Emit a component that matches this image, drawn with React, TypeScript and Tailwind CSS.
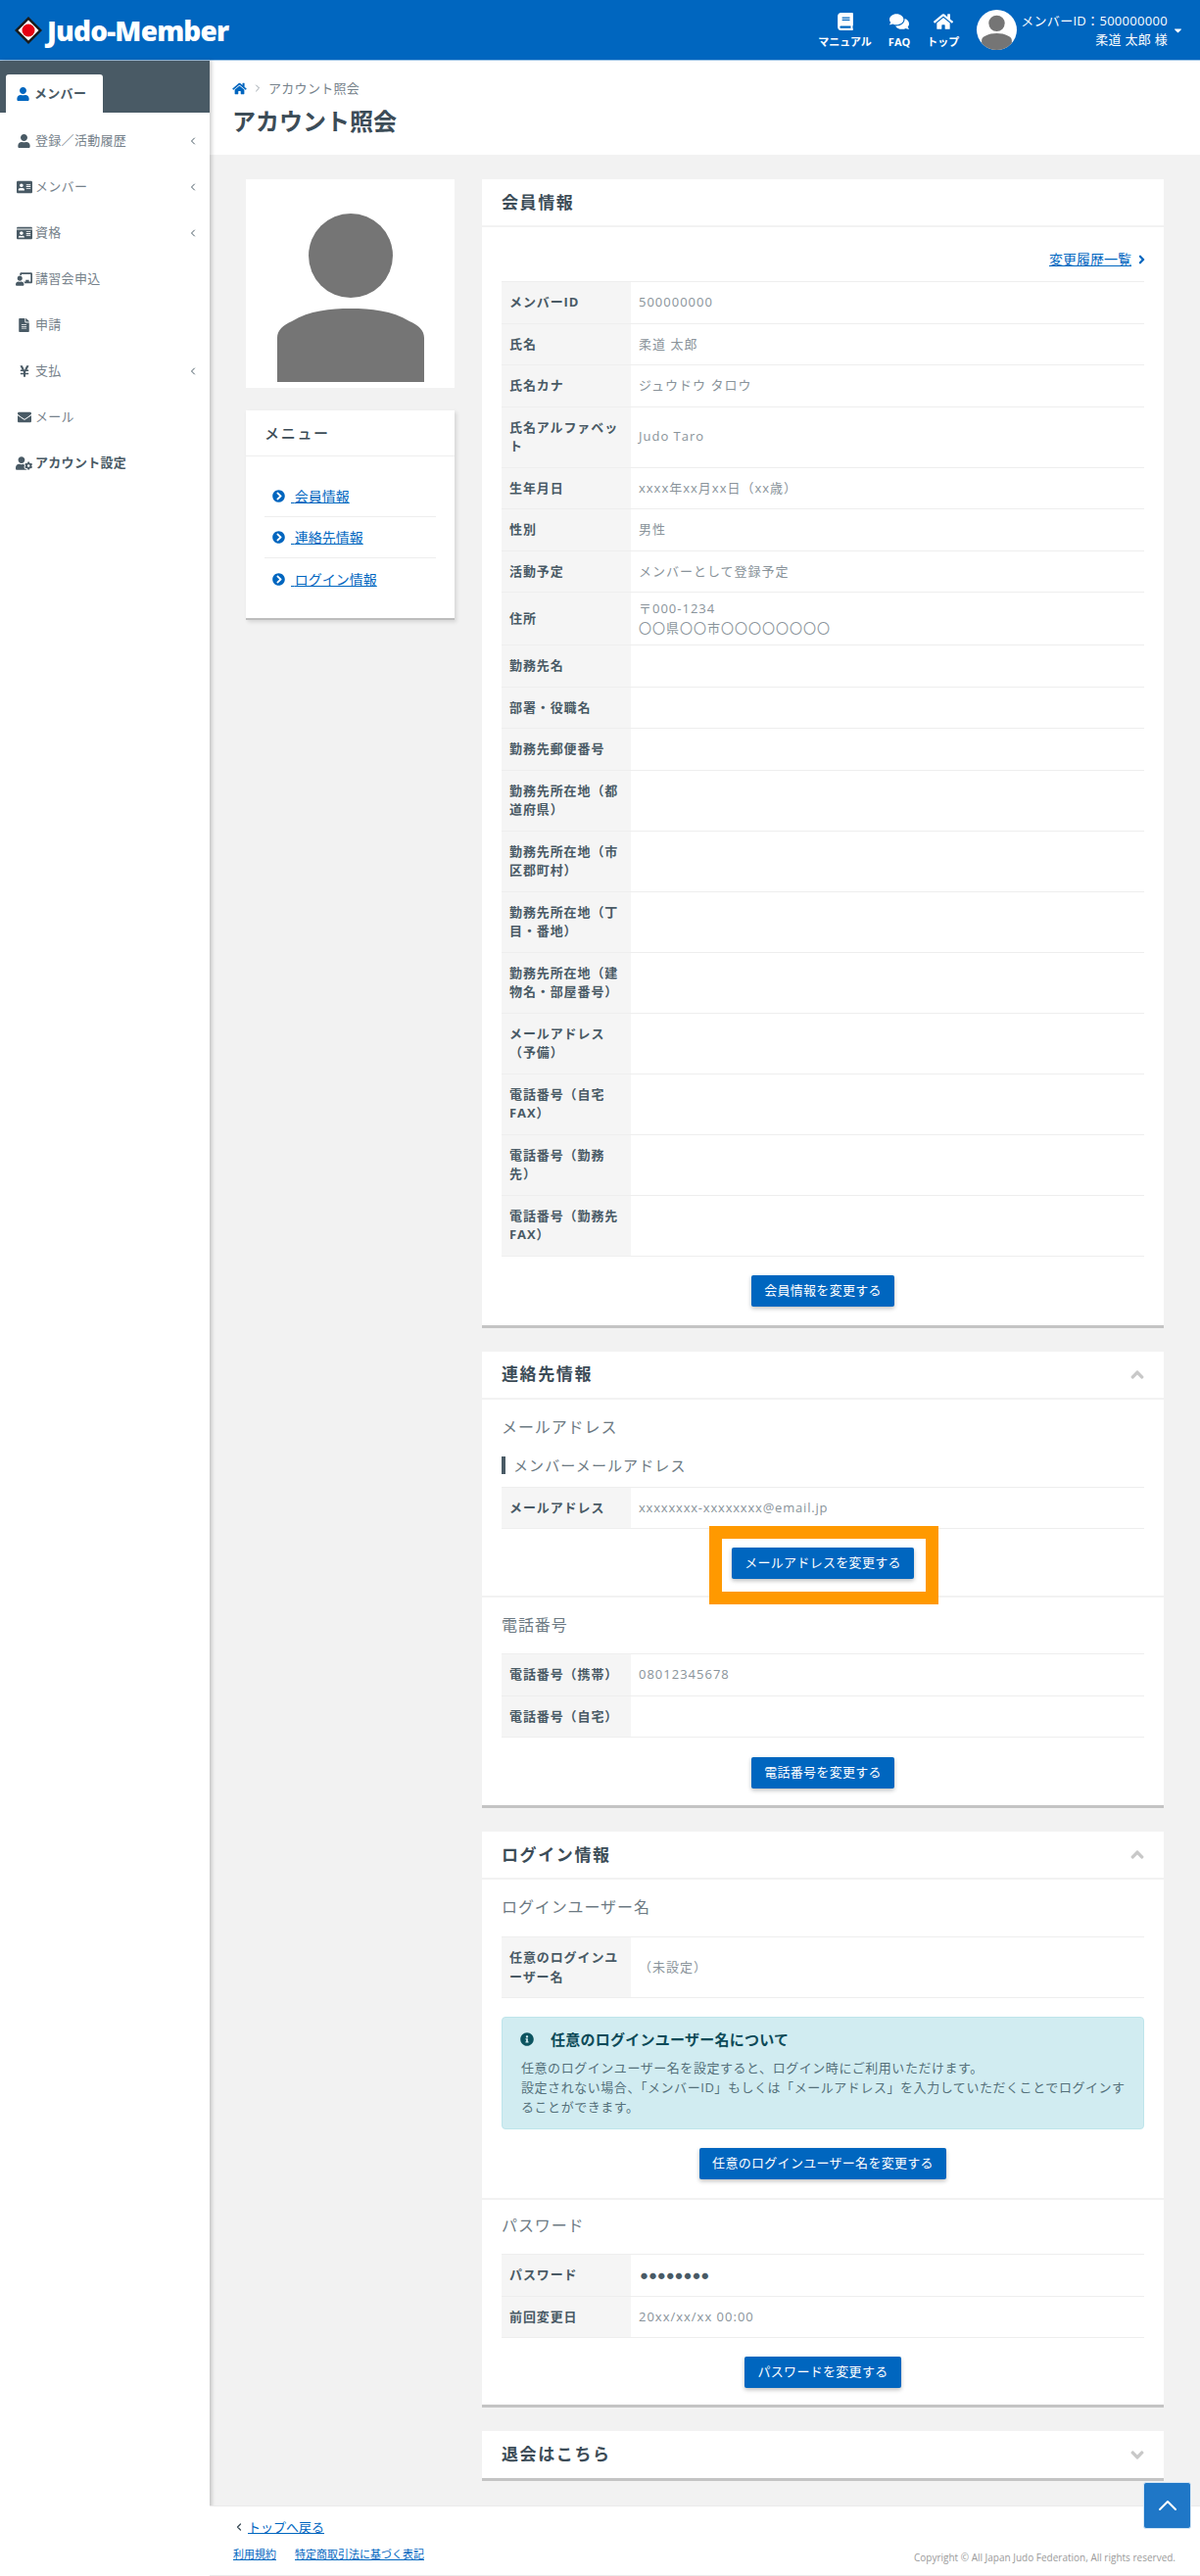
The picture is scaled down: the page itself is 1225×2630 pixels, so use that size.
import type { ReactNode } from "react";
import { ChevronLeft, ChevronRight, ChevronUp } from "lucide-react";
import {
  FaAddressCard,
  FaAngleDown,
  FaAngleRight,
  FaAngleUp,
  FaBook,
  FaCaretDown,
  FaChalkboardTeacher,
  FaChevronCircleRight,
  FaComments,
  FaEnvelope,
  FaFileAlt,
  FaHome,
  FaIdCard,
  FaInfoCircle,
  FaUser,
  FaUserCog,
  FaYenSign,
} from "react-icons/fa";

const navItems = [
  { label: "登録／活動履歴", icon: <FaUser className="w-[13px] h-[14px]" />, arrow: true },
  { label: "メンバー", icon: <FaAddressCard className="w-4 h-4" />, arrow: true },
  { label: "資格", icon: <FaIdCard className="w-4 h-4" />, arrow: true },
  { label: "講習会申込", icon: <FaChalkboardTeacher className="w-[17px] h-[14px]" /> },
  { label: "申請", icon: <FaFileAlt className="w-[11px] h-[14px]" /> },
  { label: "支払", icon: <FaYenSign className="w-[10px] h-[14px]" />, arrow: true },
  { label: "メール", icon: <FaEnvelope className="w-[14px] h-[14px]" /> },
];

const memberRows: [string, ReactNode][] = [
  ["メンバーID", "500000000"],
  ["氏名", "柔道 太郎"],
  ["氏名カナ", "ジュウドウ タロウ"],
  ["氏名アルファベット", "Judo Taro"],
  ["生年月日", "xxxx年xx月xx日（xx歳）"],
  ["性別", "男性"],
  ["活動予定", "メンバーとして登録予定"],
  [
    "住所",
    <>
      〒000-1234
      <br />
      〇〇県〇〇市〇〇〇〇〇〇〇〇
    </>,
  ],
  ["勤務先名", ""],
  ["部署・役職名", ""],
  ["勤務先郵便番号", ""],
  ["勤務先所在地（都道府県）", ""],
  ["勤務先所在地（市区郡町村）", ""],
  ["勤務先所在地（丁目・番地）", ""],
  ["勤務先所在地（建物名・部屋番号）", ""],
  ["メールアドレス（予備）", ""],
  ["電話番号（自宅FAX）", ""],
  ["電話番号（勤務先）", ""],
  ["電話番号（勤務先FAX）", ""],
];

function Logo() {
  return (
    <svg viewBox="0 0 28 28" className="w-[28px] h-[28px] shrink-0">
      <path d="M14 0 L28 14 L14 28 L0 14 Z" fill="#1a1a1a" />
      <path d="M14 3.5 L24.5 14 L14 24.5 L3.5 14 Z" fill="#fff" />
      <circle cx="14" cy="14" r="6.5" fill="#e60012" />
    </svg>
  );
}

function Avatar() {
  return (
    <svg viewBox="0 0 40 40" className="w-[41px] h-[41px] rounded-full bg-white">
      <circle cx="20" cy="13.5" r="8" fill="#757575" />
      <path d="M5 40 V30.5 C5 28 6.5 27 8.5 26 C12 24.2 16 23.5 20 23.5 C24 23.5 28 24.2 31.5 26 C33.5 27 35 28 35 30.5 V40 Z" fill="#757575" />
    </svg>
  );
}

function HeaderLink({ icon, label }: { icon: ReactNode; label: string }) {
  return (
    <a href="#" className="flex flex-col items-center text-white">
      <span className="h-[20px] flex items-center justify-center">{icon}</span>
      <span className="mt-[4px] text-[11px] leading-[14px] font-bold tracking-normal">{label}</span>
    </a>
  );
}

// Header Component
function Header() {
  return (
    <header className="h-[62px] bg-[#0066bf] border-b border-[#9cc3e6] flex items-center justify-between pl-[15px] pr-[18px] text-white">
      <div className="flex items-center gap-[5px]">
        <Logo />
        <span className="text-[28px] leading-none font-extrabold tracking-[-0.8px] font-['Open_Sans',sans-serif]">Judo-Member</span>
      </div>
      <div className="flex items-center">
        <nav className="flex items-start gap-[17px] pt-[1px]">
          <HeaderLink icon={<FaBook className="w-[16px] h-[18px]" />} label="マニュアル" />
          <HeaderLink icon={<FaComments className="w-[20px] h-[18px]" />} label="FAQ" />
          <HeaderLink icon={<FaHome className="w-[20px] h-[18px]" />} label="トップ" />
        </nav>
        <div className="ml-[18px]">
          <Avatar />
        </div>
        <div className="ml-[4px] text-right text-[13px] leading-[19px] tracking-[0.3px]">
          <div>メンバーID：500000000</div>
          <div>柔道 太郎 様</div>
        </div>
        <FaCaretDown className="ml-[6px] w-[9px] h-[12px]" />
      </div>
    </header>
  );
}

// Sidebar
function Sidebar() {
  return (
    <aside className="w-[214px] shrink-0 bg-white shadow-[2px_0_4px_rgba(0,0,0,0.2)] relative">
      <div className="h-[53px] bg-[#495a65] flex items-end pl-[6px]">
        <div className="w-[99px] h-[39px] bg-white rounded-t-[3px] flex items-center gap-[5px] pl-[11px] text-[13px] font-bold text-[#495a65] tracking-[0.3px]">
          <FaUser className="w-[13px] h-[14px] text-[#0066bf]" />
          メンバー
        </div>
      </div>
      <ul className="pt-[5px]">
        {navItems.map((item) => (
          <li key={item.label} className="h-[47px] flex items-center pl-[16px] pr-[11px] text-[13px] text-[#76828b] tracking-[0.3px]">
            <span className="w-[17px] flex justify-center text-[#495a65] shrink-0">{item.icon}</span>
            <span className="ml-[3px] flex-1">{item.label}</span>
            {item.arrow && <ChevronLeft size={12} strokeWidth={2} className="text-[#495a65]" />}
          </li>
        ))}
        <li className="h-[47px] flex items-center pl-[16px] text-[13px] font-bold text-[#495a65] tracking-[0.3px]">
          <span className="w-[17px] flex justify-center shrink-0">
            <FaUserCog className="w-[17px] h-[14px]" />
          </span>
          <span className="ml-[3px]">アカウント設定</span>
        </li>
      </ul>
    </aside>
  );
}

function InfoRow({ label, children }: { label: string; children?: ReactNode }) {
  return (
    <div className="flex border-b border-[#eeeeee] leading-[19.5px] text-[13px]">
      <div className="w-[132px] shrink-0 bg-[#f5f5f5] py-[11px] px-[8px] flex items-center font-bold text-[#495a65] tracking-[0.9px]">
        <span className="whitespace-pre-line">{label}</span>
      </div>
      <div className="flex-1 px-[8px] py-[7px] flex items-center text-[#89939a] tracking-[1px]">
        <div>{children}</div>
      </div>
    </div>
  );
}

function ActionButton({ children }: { children: ReactNode }) {
  return (
    <button className="h-[32px] px-[13px] mx-auto block bg-[#0066bf] text-white text-[13px] tracking-[0.3px] rounded-[2px] shadow-[0_2px_4px_rgba(0,0,0,0.25)]">
      {children}
    </button>
  );
}

function Card({ title, toggle, children }: { title: string; toggle?: "up" | "down"; children?: ReactNode }) {
  return (
    <section className="bg-white border-b-[3px] border-[#c4c4c4]">
      <div className={`${children ? "h-[49px] border-b-2 border-[#f2f2f2]" : "h-[48px]"} px-[20px] flex items-center justify-between`}>
        <h2 className="text-[17px] font-bold text-[#3c4c57] tracking-[1.6px]">{title}</h2>
        {toggle === "up" && <FaAngleUp className="w-[14px] h-[21px] text-[#c8c8c8]" />}
        {toggle === "down" && <FaAngleDown className="w-[14px] h-[21px] text-[#c8c8c8]" />}
      </div>
      {children}
    </section>
  );
}

function SectionHeading({ children }: { children: ReactNode }) {
  return <h3 className="text-[16px] leading-[24px] text-[#6d7a83] tracking-[0.9px]">{children}</h3>;
}

function MemberCard() {
  return (
    <Card title="会員情報">
      <div className="px-[20px] pb-[19px]">
        <div className="h-[55px] flex items-end justify-end pb-[12px] text-[14px] text-[#0066bf]">
          <a href="#" className="underline leading-[20px]">変更履歴一覧</a>
          <FaAngleRight className="ml-[7px] -mr-[1px] mb-[3px] w-[7px] h-[14px]" />
        </div>
        <div className="border-t border-[#eeeeee]">
          {memberRows.map(([label, value]) => (
            <InfoRow key={label} label={label}>
              {value}
            </InfoRow>
          ))}
        </div>
        <div className="mt-[19px]">
          <ActionButton>会員情報を変更する</ActionButton>
        </div>
      </div>
    </Card>
  );
}

function ContactCard() {
  return (
    <Card title="連絡先情報" toggle="up">
      <div className="px-[20px] pt-[16px] pb-[17px] border-b-2 border-[#f2f2f2]">
        <SectionHeading>メールアドレス</SectionHeading>
        <h4 className="mt-[18px] border-l-[4px] border-[#495a65] pl-[8px] text-[15px] leading-[18px] text-[#6d7a83] tracking-[1.1px]">
          メンバーメールアドレス
        </h4>
        <div className="mt-[13px] border-t border-[#eeeeee]">
          <InfoRow label="メールアドレス">
            <span className="tracking-[0.8px]">xxxxxxxx-xxxxxxxx@email.jp</span>
          </InfoRow>
        </div>
        <div className="mt-[19px] flex justify-center">
          <div className="relative">
            <ActionButton>メールアドレスを変更する</ActionButton>
            {/* highlight frame over the button */}
            <div className="absolute -left-[23px] -right-[25px] -top-[22px] -bottom-[26px] border-[13px] border-[#ff9900] pointer-events-none" />
          </div>
        </div>
      </div>
      <div className="px-[20px] pt-[16px] pb-[17px]">
        <SectionHeading>電話番号</SectionHeading>
        <div className="mt-[17px] border-t border-[#eeeeee]">
          <InfoRow label="電話番号（携帯）">08012345678</InfoRow>
          <InfoRow label="電話番号（自宅）" />
        </div>
        <div className="mt-[20px]">
          <ActionButton>電話番号を変更する</ActionButton>
        </div>
      </div>
    </Card>
  );
}

function LoginCard() {
  return (
    <Card title="ログイン情報" toggle="up">
      <div className="px-[20px] pt-[16px] pb-[19px] border-b-2 border-[#f2f2f2]">
        <SectionHeading>ログインユーザー名</SectionHeading>
        <div className="mt-[18px] border-t border-[#eeeeee]">
          <InfoRow label={"任意のログインユ\nーザー名"}>（未設定）</InfoRow>
        </div>
        <div className="mt-[19px] bg-[#d1ecf1] border border-[#bee5eb] rounded-[4px] pl-[19px] pr-[18px] pt-[11px] pb-[12px]">
          <div className="flex items-center text-[15px] leading-[22px] font-bold text-[#0c4a58] tracking-[0.25px]">
            <FaInfoCircle className="w-[14px] h-[14px] text-[#0c5460] ml-[-1px] mr-[17px]" />
            任意のログインユーザー名について
          </div>
          <p className="mt-[8px] text-[13px] leading-[20px] tracking-[0.55px] text-[#54707a]">
            任意のログインユーザー名を設定すると、ログイン時にご利用いただけます。
            <br />
            設定されない場合、「メンバーID」もしくは「メールアドレス」を入力していただくことでログインすることができます。
          </p>
        </div>
        <div className="mt-[19px]">
          <ActionButton>任意のログインユーザー名を変更する</ActionButton>
        </div>
      </div>
      <div className="px-[20px] pt-[14px] pb-[17px]">
        <SectionHeading>パスワード</SectionHeading>
        <div className="mt-[17px] border-t border-[#eeeeee]">
          <InfoRow label="パスワード">
            <span className="inline-block ml-[2px] text-[#495a65] text-[7px] tracking-[1.9px]">●●●●●●●●</span>
          </InfoRow>
          <InfoRow label="前回変更日">20xx/xx/xx 00:00</InfoRow>
        </div>
        <div className="mt-[19px]">
          <ActionButton>パスワードを変更する</ActionButton>
        </div>
      </div>
    </Card>
  );
}

function LeftColumn() {
  return (
    <div className="w-[213px] shrink-0">
      <div className="bg-white h-[213px] flex items-end justify-center pb-[6px]">
        <svg viewBox="0 0 150 173" className="w-[150px] h-[173px]">
          <circle cx="75" cy="44" r="43" fill="#757575" />
          <path d="M0 173 V128 C0 120 6 115 15 111 C33 100 54 98 75 98 C96 98 117 100 135 111 C144 115 150 120 150 128 V173 Z" fill="#757575" />
        </svg>
      </div>
      <div className="mt-[23px] bg-white h-[214px] border-b-[2px] border-[#bdbdbd] shadow-[2px_2px_4px_rgba(0,0,0,0.12)]">
        <div className="h-[47px] px-[19px] flex items-center border-b border-[#eeeeee] text-[15px] font-medium text-[#3c4c57] tracking-[1.7px]">
          メニュー
        </div>
        <ul className="mx-[19px] mt-[20px]">
          {["会員情報", "連絡先情報", "ログイン情報"].map((name, i) => (
            <li key={name} className={`h-[42px] flex items-center pl-[8px] text-[14px] text-[#0066bf] ${i < 2 ? "border-b border-[#eeeeee]" : ""}`}>
              <FaChevronCircleRight className="w-[13px] h-[13px] mr-[6px]" />
              <a href="#" className="underline">{"\u00a0"}{name}</a>
            </li>
          ))}
        </ul>
      </div>
    </div>
  );
}

function Footer() {
  return (
    <footer className="h-[72px] bg-white border-t border-[#ebebeb] border-b pl-[24px] pr-[25px] relative">
      <div className="pt-[11px] flex items-center text-[13px] leading-[20px] text-[#0066bf]">
        <ChevronLeft size={12} strokeWidth={2.5} className="mr-[3px] text-[#3c4c57]" />
        <a href="#" className="underline">トップへ戻る</a>
      </div>
      <div className="mt-[10px] flex items-end justify-between">
        <div className="flex gap-[19px] text-[11px] leading-[16px] text-[#0066bf]">
          <a href="#" className="underline">利用規約</a>
          <a href="#" className="underline">特定商取引法に基づく表記</a>
        </div>
        <div className="text-[10px] text-[#9a9a9a] leading-[14px] translate-y-[2px]">Copyright © All Japan Judo Federation, All rights reserved.</div>
      </div>
    </footer>
  );
}

// Main Page
export default function App() {
  return (
    <div className="min-h-[2630px] flex flex-col bg-white font-['Open_Sans','Noto_Sans_CJK_JP',sans-serif]">
      <Header />
      <div className="flex flex-1">
        <Sidebar />
        <main className="flex-1 flex flex-col min-w-0">
          <div className="h-[96px] bg-white pl-[23px]">
            <div className="pt-[18px] flex items-center text-[13px] leading-[20px] text-[#76828b] tracking-[0.3px]">
              <FaHome className="w-[15px] h-[13px] text-[#0066bf]" />
              <ChevronRight size={12} strokeWidth={1.5} className="mx-[5px]" />
              アカウント照会
            </div>
            <h1 className="mt-[8px] text-[24px] leading-[32px] font-bold text-[#3c4c57]">アカウント照会</h1>
          </div>
          <div className="flex-1 bg-[#f2f2f2] pt-[25px] pl-[37px] pr-[37px] flex gap-[28px] items-start">
            <LeftColumn />
            <div className="flex-1 min-w-0 flex flex-col gap-[24px]">
              <MemberCard />
              <ContactCard />
              <LoginCard />
              <Card title="退会はこちら" toggle="down" />
            </div>
          </div>
          <Footer />
        </main>
      </div>
      <a href="#" className="fixed right-[9px] top-[2534px] w-[49px] h-[48px] bg-[#1f77c7] border border-[#d5e6f5] rounded-[3px] flex items-center justify-center text-white">
        <ChevronUp size={32} strokeWidth={1.5} />
      </a>
    </div>
  );
}
